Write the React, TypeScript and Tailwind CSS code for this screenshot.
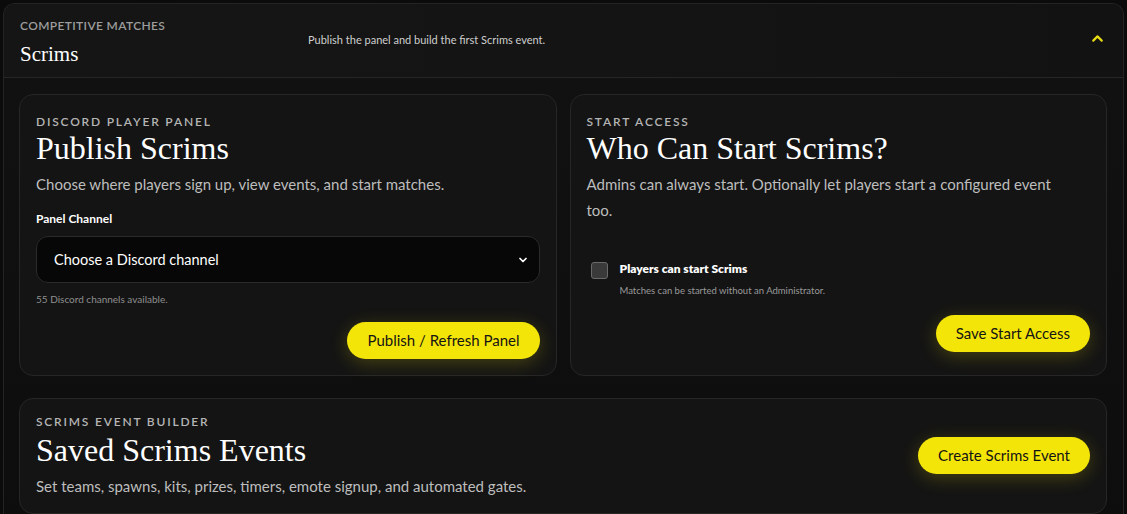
import React, { useState } from 'react';

const SANS = "font-['Lato','Segoe_UI','Noto_Sans',sans-serif]";
const SERIF = "font-['Liberation_Serif','Georgia',serif]";

const Eyebrow = ({ children }: { children: React.ReactNode }) => (
  <div className="text-[12px] font-semibold uppercase tracking-[0.15em] text-[#b5b5b5] leading-4">{children}</div>
);

const YellowButton = ({ children }: { children: React.ReactNode }) => (
  <button className="h-[37px] px-5 rounded-full bg-[#f4e509] text-[#141414] text-[15px] shadow-[0_4px_18px_rgba(244,229,9,0.22)]">
    {children}
  </button>
);

export default function App() {
  const [open, setOpen] = useState(true);
  const [playersCanStart, setPlayersCanStart] = useState(false);

  return (
    <div className={`min-h-screen bg-[#0b0b0b] p-[3px] pb-0 ${SANS}`}>
      <div className="rounded-t-[12px] border border-[#242424] border-b-0 bg-[#101010] overflow-hidden">
        <header className="h-[74px] flex items-start justify-between px-4 bg-gradient-to-r from-[#151515] via-[#141414] to-[#121212] border-b border-[#262626]">
          <div className="pt-[14px] w-[288px]">
            <div className="text-[12px] font-semibold uppercase tracking-[0.03em] text-[#9d9d9d] leading-4">Competitive Matches</div>
            <div className={`${SERIF} text-[21px] text-white leading-6 mt-[8px]`}>Scrims</div>
          </div>
          <div className="flex-1 pt-[28px] text-[11px] text-[#cfcfcf]">Publish the panel and build the first Scrims event.</div>
          <button onClick={() => setOpen(!open)} className="mt-[26px] mr-[1px] text-[#e8dc14]">
            <svg width="17" height="17" viewBox="0 0 24 24" fill="none" stroke="currentColor" strokeWidth="3" strokeLinecap="round" strokeLinejoin="round">
              <path d={open ? 'M6 15l6-6 6 6' : 'M6 9l6 6 6-6'} />
            </svg>
          </button>
        </header>

        {open && (
          <div className="pl-[15px] pr-4 pt-4 pb-4 flex flex-col gap-[22px] bg-gradient-to-b from-[#111111] to-[#0d0d0d]">
            <div className="grid grid-cols-2 gap-[13px]">
              <section className="h-[282px] rounded-[14px] border border-[#262626] bg-[#141414] px-4 pt-[19px] pb-4 flex flex-col">
                <Eyebrow>Discord Player Panel</Eyebrow>
                <h2 className={`${SERIF} text-[32px] leading-9 text-white`}>Publish Scrims</h2>
                <p className="text-[15px] text-[#bdbdbd] mt-[7px] leading-[22px]">Choose where players sign up, view events, and start matches.</p>
                <label className="text-[12px] font-bold text-white mt-[16px] leading-4">Panel Channel</label>
                <div className="mt-[9px] h-[47px] rounded-[12px] border border-[#2a2a2a] bg-[#070707] flex items-center justify-between pl-[17px] pr-[10px]">
                  <span className="text-[14.5px] text-white">Choose a Discord channel</span>
                  <svg width="12" height="12" viewBox="0 0 24 24" fill="none" stroke="white" strokeWidth="3.5" strokeLinecap="round" strokeLinejoin="round">
                    <path d="M6 9l6 6 6-6" />
                  </svg>
                </div>
                <div className="text-[10px] text-[#8f8f8f] mt-[8px] leading-4">55 Discord channels available.</div>
                <div className="flex justify-end mt-auto">
                  <YellowButton>Publish / Refresh Panel</YellowButton>
                </div>
              </section>

              <section className="h-[282px] rounded-[14px] border border-[#262626] bg-[#141414] px-4 pt-[19px] pb-[23px] flex flex-col">
                <Eyebrow>Start Access</Eyebrow>
                <h2 className={`${SERIF} text-[32px] leading-9 text-white`}>Who Can Start Scrims?</h2>
                <p className="text-[15px] text-[#bdbdbd] mt-[5px] leading-[26px] pr-6">Admins can always start. Optionally let players start a configured event too.</p>
                <label className="mt-[38px] flex items-start gap-3 pl-[4px] cursor-pointer">
                  <span
                    onClick={() => setPlayersCanStart(!playersCanStart)}
                    className={`mt-[1px] w-[17px] h-[17px] rounded-[3px] border border-[#6a6a6a] ${playersCanStart ? 'bg-[#f4e509]' : 'bg-[#3a3a3a]'}`}
                  />
                  <span className="flex flex-col">
                    <span className="text-[12px] font-extrabold text-white leading-4">Players can start Scrims</span>
                    <span className="text-[9.5px] text-[#9a9a9a] mt-[8px] leading-3">Matches can be started without an Administrator.</span>
                  </span>
                </label>
                <div className="flex justify-end mt-auto">
                  <YellowButton>Save Start Access</YellowButton>
                </div>
              </section>
            </div>

            <section className="rounded-[14px] border border-[#262626] bg-[#141414] px-4 pt-[15px] pb-[16px] flex items-center justify-between">
              <div>
                <Eyebrow>Scrims Event Builder</Eyebrow>
                <h2 className={`${SERIF} text-[32px] leading-9 text-white mt-[2px]`}>Saved Scrims Events</h2>
                <p className="text-[15px] text-[#bdbdbd] mt-[7px] leading-[22px]">Set teams, spawns, kits, prizes, timers, emote signup, and automated gates.</p>
              </div>
              <YellowButton>Create Scrims Event</YellowButton>
            </section>
          </div>
        )}
      </div>
    </div>
  );
}
